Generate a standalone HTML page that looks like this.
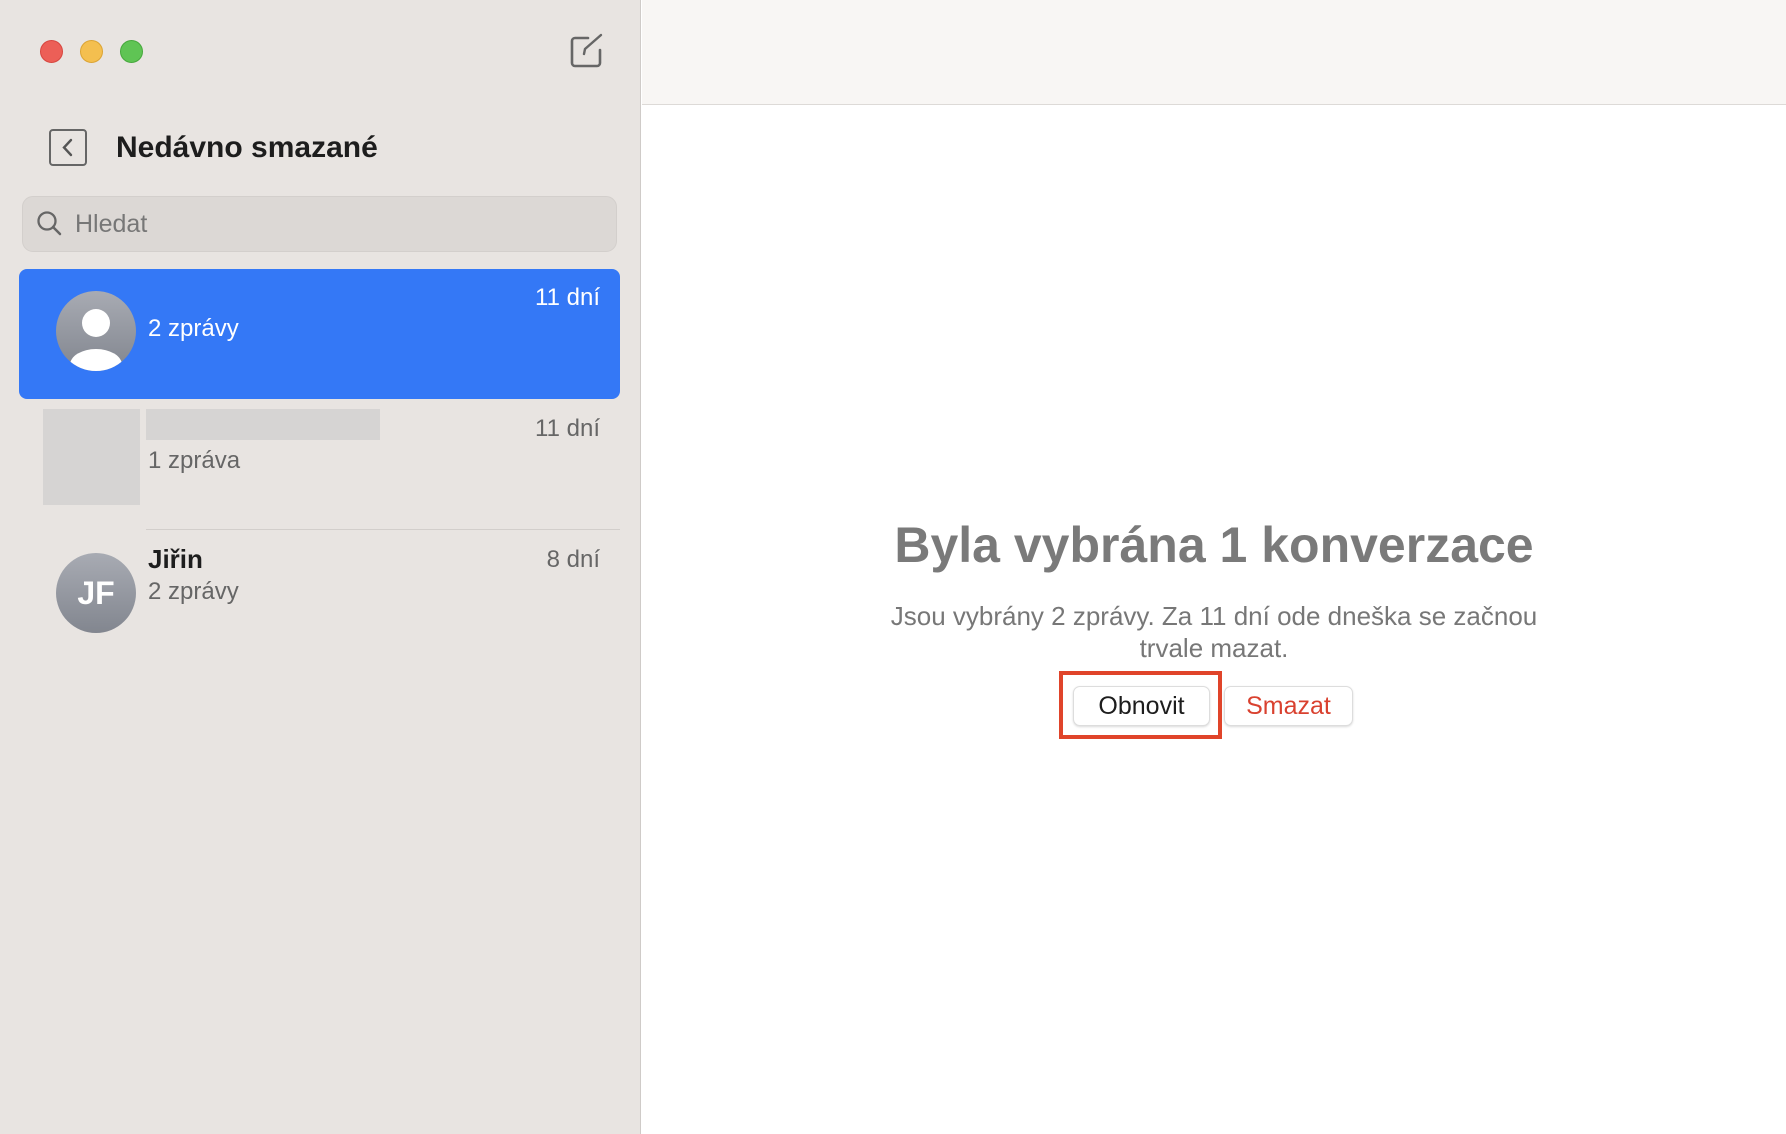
<!DOCTYPE html>
<html><head><meta charset="utf-8"><style>
*{margin:0;padding:0;box-sizing:border-box}
body{width:1786px;height:1134px;overflow:hidden;background:#fff;font-family:"Liberation Sans",sans-serif;position:relative}
.a{position:absolute}
.side{left:0;top:0;width:641px;height:1134px;background:#e8e4e1;border-right:1px solid #cfcbc8}
.top{left:642px;top:0;right:0;height:105px;background:#f8f6f4;border-bottom:1px solid #dddad7}
.dot{width:23px;height:23px;border-radius:50%;top:40px}
.t{white-space:nowrap}
</style></head><body>
<div class="a side"></div>
<div class="a top"></div>
<div class="a dot" style="left:40px;background:#ec5f57;border:1px solid #d7463f"></div>
<div class="a dot" style="left:80px;background:#f4bf4f;border:1px solid #dca433"></div>
<div class="a dot" style="left:120px;background:#5fc454;border:1px solid #46a83c"></div>
<svg class="a" style="left:568px;top:32px" width="38" height="38" viewBox="0 0 38 38"><path d="M20 6H7a3 3 0 0 0-3 3v22a3 3 0 0 0 3 3h22a3 3 0 0 0 3-3V18" fill="none" stroke="#666" stroke-width="2.6" stroke-linecap="round"/><path d="M16 22l1-5L33 3" fill="none" stroke="#666" stroke-width="2.4" stroke-linecap="round"/></svg>
<div class="a" style="left:49px;top:129px;width:38px;height:37px;border:2.5px solid #666;border-radius:4px"></div>
<svg class="a" style="left:49px;top:129px" width="38" height="37"><path d="M22 11l-7 7.5 7 7.5" fill="none" stroke="#555" stroke-width="2.4" stroke-linecap="round"/></svg>
<div class="a t" style="left:116px;top:131px;font-size:30px;font-weight:bold;color:#1d1d1d">Nedávno smazané</div>
<div class="a" style="left:22px;top:196px;width:595px;height:56px;background:#dcd8d5;border-radius:11px;border:1px solid #d3cfcc"></div>
<svg class="a" style="left:36px;top:210px" width="28" height="28"><circle cx="11" cy="11" r="8.5" fill="none" stroke="#666" stroke-width="2.3"/><path d="M17 17l7 7" stroke="#666" stroke-width="2.5" stroke-linecap="round"/></svg>
<div class="a t" style="left:75px;top:210px;font-size:25px;color:#777">Hledat</div>
<div class="a" style="left:19px;top:269px;width:601px;height:130px;background:#3478f6;border-radius:8px"></div>
<svg class="a" style="left:56px;top:291px" width="80" height="80"><defs><linearGradient id="g" x1="0" y1="0" x2="0" y2="1"><stop offset="0" stop-color="#a8abb3"/><stop offset="1" stop-color="#82868f"/></linearGradient><clipPath id="c"><circle cx="40" cy="40" r="40"/></clipPath></defs><circle cx="40" cy="40" r="40" fill="url(#g)"/><circle cx="40" cy="32" r="14" fill="#fff"/><ellipse cx="40" cy="74" rx="26" ry="16" fill="#fff" clip-path="url(#c)"/></svg>
<div class="a t" style="left:148px;top:315px;font-size:24px;color:#fff">2 zprávy</div>
<div class="a t" style="right:1186px;top:284px;font-size:24px;color:#fff">11 dní</div>
<div class="a" style="left:43px;top:409px;width:97px;height:96px;background:#d6d4d3"></div>
<div class="a" style="left:146px;top:409px;width:234px;height:31px;background:#d6d4d3"></div>
<div class="a t" style="left:148px;top:447px;font-size:24px;color:#666">1 zpráva</div>
<div class="a t" style="right:1186px;top:415px;font-size:24px;color:#666">11 dní</div>
<div class="a" style="left:146px;top:529px;width:474px;height:1px;background:#d2cecb"></div>
<div class="a" style="left:56px;top:553px;width:80px;height:80px;border-radius:50%;background:linear-gradient(#a8abb3,#82868f);color:#fff;font-size:32px;font-weight:bold;text-align:center;line-height:80px">JF</div>
<div class="a t" style="left:148px;top:544px;font-size:26px;font-weight:bold;color:#1d1d1d">Jiřin</div>
<div class="a t" style="left:148px;top:578px;font-size:24px;color:#666">2 zprávy</div>
<div class="a t" style="right:1186px;top:546px;font-size:24px;color:#666">8 dní</div>
<div class="a t" style="left:642px;width:1144px;text-align:center;top:516px;font-size:50px;font-weight:bold;color:#7a7a7a">Byla vybrána 1 konverzace</div>
<div class="a" style="left:642px;width:1144px;text-align:center;top:600px;font-size:26px;line-height:32px;color:#777">Jsou vybrány 2 zprávy. Za 11 dní ode dneška se začnou<br>trvale mazat.</div>
<div class="a" style="left:1059px;top:671px;width:163px;height:68px;border:4px solid #e0442a"></div>
<div class="a t" style="left:1073px;top:686px;width:137px;height:40px;background:#fff;border:1px solid #ddd;border-radius:7px;box-shadow:0 1px 2px rgba(0,0,0,.15);text-align:center;line-height:38px;font-size:25px;color:#1d1d1d">Obnovit</div>
<div class="a t" style="left:1224px;top:686px;width:129px;height:40px;background:#fff;border:1px solid #ddd;border-radius:7px;box-shadow:0 1px 2px rgba(0,0,0,.15);text-align:center;line-height:38px;font-size:25px;color:#d9412f">Smazat</div>
</body></html>
